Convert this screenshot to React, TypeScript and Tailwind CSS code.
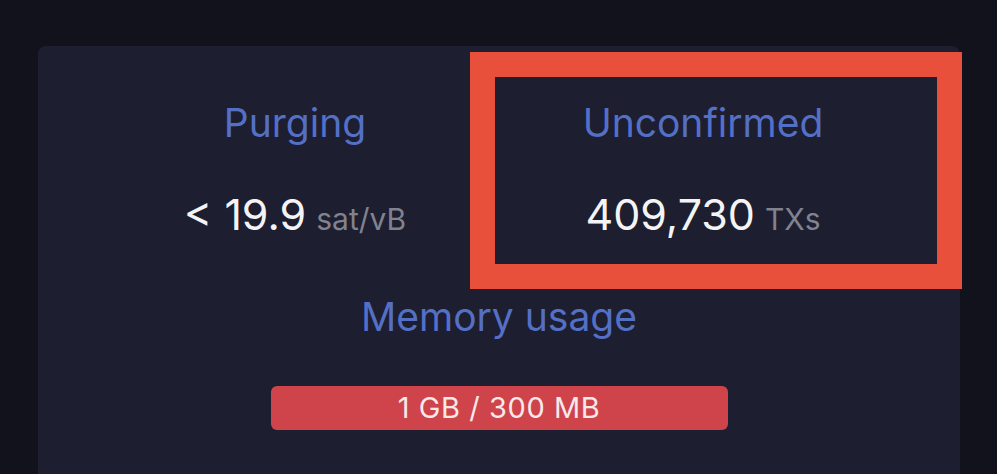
const stats = [
  { label: "Purging", prefix: "< ", value: "19.9", unit: "sat/vB" },
  { label: "Unconfirmed", prefix: "", value: "409,730", unit: "TXs" },
];

const App = () => {
  return (
    <div
      className="relative h-[474px] w-[997px] overflow-hidden bg-[#11121c] pt-[46px] pl-[38px]"
      style={{ fontFamily: "Inter, 'Noto Sans', sans-serif" }}
    >
      <div className="w-[922px] h-[460px] rounded-lg bg-[#1d1e30] pt-[55px] px-[53px]">
        <div className="grid grid-cols-2">
          {stats.map((s) => (
            <div key={s.label} className="flex flex-col items-center">
              <h3 className="text-[39px] leading-[44px] text-[#5470c6] font-normal">{s.label}</h3>
              <p className="mt-[45px] flex items-baseline text-[43px] leading-[48px] text-[#f4f4f6]">
                <span className="whitespace-pre">
                  {s.prefix}
                  {s.value}
                </span>
                <span className="ml-[10px] text-[30px] leading-none text-[#80838f]">{s.unit}</span>
              </p>
            </div>
          ))}
        </div>
        <div className="mt-[57px] flex flex-col items-center">
          <h3 className="text-[39px] leading-[44px] text-[#5470c6]">Memory usage</h3>
          <div className="mt-[47px] flex h-[44px] w-[457px] items-center justify-center rounded-md bg-[#cf434b] text-[29px] tracking-[0.02em] text-[#f6e9ea]">
            1 GB / 300 MB
          </div>
        </div>
      </div>
      <div className="absolute left-[470px] top-[52px] h-[237px] w-[492px] border-[25px] border-[#e9503c]" />
    </div>
  );
};

export default App;
